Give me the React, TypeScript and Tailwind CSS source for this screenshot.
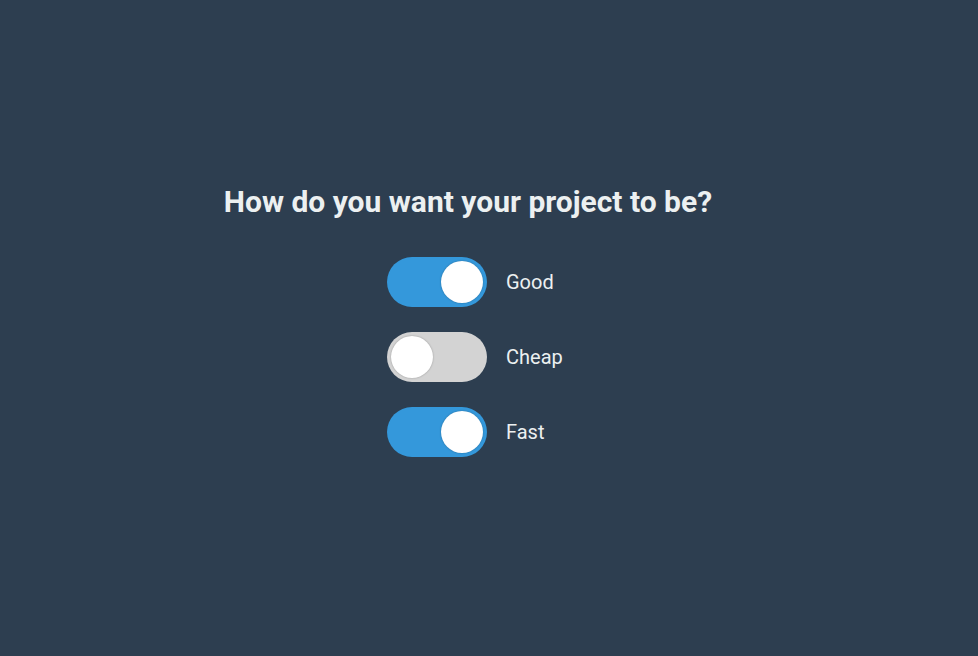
import { useState } from "react";

const options = ["Good", "Cheap", "Fast"];

const Toggle = ({ on, onClick }: { on: boolean; onClick: () => void }) => (
  <button
    onClick={onClick}
    className={`relative w-[100px] h-[50px] rounded-full shrink-0 ${
      on ? "bg-[#3498db]" : "bg-[#d3d3d3]"
    }`}
  >
    <span
      className={`absolute top-[4px] w-[42px] h-[42px] rounded-full bg-white shadow-[0_0_2px_rgba(0,0,0,0.3)] ${
        on ? "left-[54px]" : "left-[4px]"
      }`}
    />
  </button>
);

export default function App() {
  const [checked, setChecked] = useState([true, false, true]);

  const toggle = (i: number) => {
    setChecked((prev) => prev.map((v, idx) => (idx === i ? !v : v)));
  };

  return (
    <div
      className="w-full h-[656px] bg-[#2d3e50] flex flex-col items-center pt-[182px] pr-[42px] text-[#ecf0f1]"
      style={{ fontFamily: "Roboto, sans-serif" }}
    >
      <h1 className="text-[30px] font-bold leading-[40px]">
        How do you want your project to be?
      </h1>
      <div className="w-[162px] mt-[35px] flex flex-col gap-[25px]">
        {options.map((label, i) => (
          <div key={label} className="flex items-center">
            <Toggle on={checked[i]} onClick={() => toggle(i)} />
            <span className="ml-[19px] text-[20px]">{label}</span>
          </div>
        ))}
      </div>
    </div>
  );
}
